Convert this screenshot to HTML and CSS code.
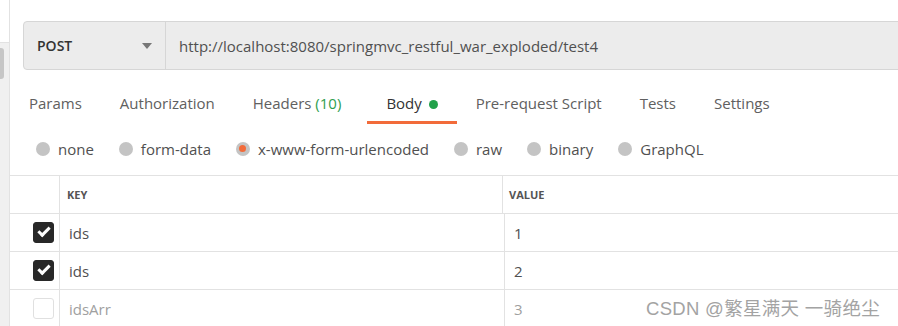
FILE: index.html
```html
<!DOCTYPE html>
<html lang="en">
<head>
    <meta charset="UTF-8">
    <title>Postman - POST test4</title>
    <link rel="stylesheet" href="styles.css">
</head>
<body>
    <div class="sidebar">
        <div class="sidebar-top"></div>
        <div class="sidebar-track"><div class="thumb"></div></div>
    </div>

    <div class="main">
        <div class="url-bar">
            <div class="method">
                <span>POST</span>
                <span class="caret"></span>
            </div>
            <div class="url">http://localhost:8080/springmvc_restful_war_exploded/test4</div>
        </div>

        <div class="tabs">
            <div class="tab">Params</div>
            <div class="tab">Authorization</div>
            <div class="tab headers">Headers <span class="count">(10)</span></div>
            <div class="tab active">Body <span class="dot"></span></div>
            <div class="tab">Pre-request Script</div>
            <div class="tab">Tests</div>
            <div class="tab">Settings</div>
        </div>

        <div class="body-types">
            <label class="radio"><span class="circle"></span>none</label>
            <label class="radio"><span class="circle"></span>form-data</label>
            <label class="radio selected"><span class="circle"></span>x-www-form-urlencoded</label>
            <label class="radio"><span class="circle"></span>raw</label>
            <label class="radio"><span class="circle"></span>binary</label>
            <label class="radio"><span class="circle"></span>GraphQL</label>
        </div>

        <div class="params">
            <div class="row head">
                <div class="cell check"></div>
                <div class="cell key">KEY</div>
                <div class="cell value">VALUE</div>
            </div>
            <div class="row">
                <div class="cell check"><span class="box on"></span></div>
                <div class="cell key">ids</div>
                <div class="cell value">1</div>
            </div>
            <div class="row">
                <div class="cell check"><span class="box on"></span></div>
                <div class="cell key">ids</div>
                <div class="cell value">2</div>
            </div>
            <div class="row off">
                <div class="cell check"><span class="box"></span></div>
                <div class="cell key">idsArr</div>
                <div class="cell value">3</div>
            </div>
        </div>
    </div>

    <div class="watermark">CSDN @繁星满天 一骑绝尘</div>
</body>
</html>
```

FILE: styles.css
```css
body {
    font-family: 'Open Sans', 'Noto Sans', sans-serif;
    color: #505050;
    background-color: #fff;
    margin: 0;
    height: 326px;
    overflow: hidden;
    display: flex;
    position: relative;
}

/* left collapsed panel with its scrollbar */
.sidebar {
    width: 9px;
    border-right: 1px solid #e2e2e2;
    display: flex;
    flex-direction: column;
}

.sidebar-top {
    height: 42px;
    border-bottom: 1px solid #e2e2e2;
}

.sidebar-track {
    flex: 1;
    background-color: #f0f0f0;
    padding-top: 5px;
}

.thumb {
    width: 4px;
    height: 31px;
    background-color: #c6c6c6;
    border-radius: 0 3px 3px 0;
}

.main {
    flex: 1;
    min-width: 0;
}

/* request url bar */
.url-bar {
    display: flex;
    height: 47px;
    margin: 21px -12px 0 13px;
    background-color: #ececec;
    border: 1px solid #d6d6d6;
    border-radius: 4px;
}

.method {
    width: 142px;
    border-right: 1px solid #d6d6d6;
    display: flex;
    align-items: center;
    justify-content: space-between;
    padding: 0 13px;
    box-sizing: border-box;
    font-size: 14px;
    font-weight: 600;
    color: #333;
}

.caret {
    width: 0;
    height: 0;
    border-left: 5px solid transparent;
    border-right: 5px solid transparent;
    border-top: 6px solid #777;
}

.url {
    display: flex;
    align-items: center;
    padding-left: 13px;
    font-size: 15px;
    color: #505050;
    white-space: nowrap;
}

/* request tabs */
.tabs {
    display: flex;
    margin-top: 17px;
}

.tab {
    padding: 6px 19px 0;
    height: 28px;
    font-size: 15px;
    color: #606060;
    white-space: nowrap;
    border-bottom: 3px solid transparent;
}

.tab.headers {
    margin-right: 7px;
}

.tab.active {
    color: #333;
    border-bottom-color: #f26b3a;
}

.count {
    color: #2f9e4f;
}

.dot {
    display: inline-block;
    width: 9px;
    height: 9px;
    margin-left: 3px;
    border-radius: 50%;
    background-color: #22a14a;
}

/* body type radios */
.body-types {
    display: flex;
    gap: 25px;
    padding: 14px 0 0 26px;
    height: 37px;
}

.radio {
    display: flex;
    align-items: center;
    gap: 8px;
    height: 21px;
    font-size: 15px;
    color: #505050;
}

.circle {
    width: 14px;
    height: 14px;
    border-radius: 50%;
    background-color: #c4c4c4;
    display: flex;
    align-items: center;
    justify-content: center;
}

.radio.selected .circle::after {
    content: "";
    width: 7px;
    height: 7px;
    border-radius: 50%;
    background-color: #f26b3a;
}

/* key / value table */
.params {
    border-top: 1px solid #e2e2e2;
    margin-right: -12px;
}

.row {
    display: flex;
    height: 37px;
    border-bottom: 1px solid #e2e2e2;
}

.cell {
    display: flex;
    align-items: center;
    font-size: 15px;
}

.cell.check {
    width: 50px;
    justify-content: flex-end;
    padding-right: 5px;
    box-sizing: border-box;
    border-right: 1px solid #e2e2e2;
}

.cell.key {
    width: 435px;
    padding-left: 9px;
    border-right: 1px solid #e2e2e2;
}

.cell.value {
    flex: 1;
    padding-left: 9px;
}

.row.head .cell {
    font-size: 11px;
    font-weight: 700;
    color: #555;
}

.row.head .cell.key {
    padding-left: 7px;
}

.row.head .cell.value {
    padding-left: 6px;
}

.row.off .cell {
    color: #a0a0a0;
}

.box {
    width: 21px;
    height: 21px;
    box-sizing: border-box;
    border-radius: 3px;
    border: 1px solid #e0e0e0;
    background-color: #fff;
    display: flex;
    align-items: center;
    justify-content: center;
}

.box.on {
    background-color: #282828;
    border-color: #282828;
}

.box.on::after {
    content: "";
    width: 9px;
    height: 4px;
    border-left: 3px solid #fff;
    border-bottom: 3px solid #fff;
    transform: translateY(-2px) rotate(-45deg);
}

.watermark {
    position: absolute;
    right: 18px;
    bottom: 6px;
    font-family: 'Liberation Sans', 'Noto Sans CJK SC', sans-serif;
    font-size: 18.5px;
    color: #a3a3a3;
    letter-spacing: 0.3px;
}
```
